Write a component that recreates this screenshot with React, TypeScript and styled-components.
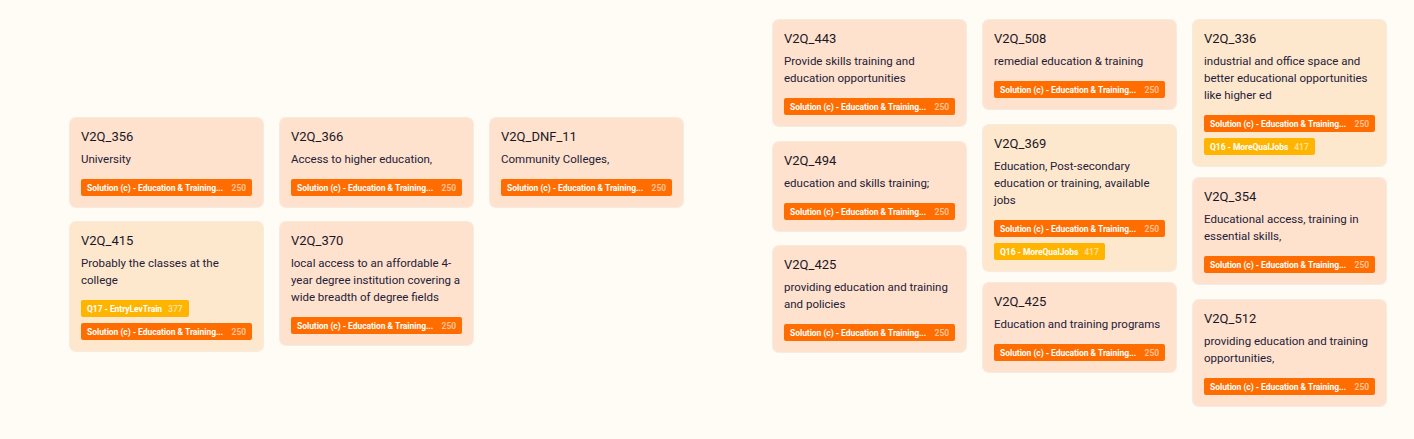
import React from 'react';
import styled, { createGlobalStyle } from 'styled-components';

type TagKind = 'solution' | 'question';

interface TagData {
  kind: TagKind;
  label: string;
  count: number;
}

interface CardData {
  id: string;
  text: string;
  tags: TagData[];
  space?: number;
}

const SOLUTION: TagData = { kind: 'solution', label: 'Solution (c) - Education & Training...', count: 250 };
const JOBS: TagData = { kind: 'question', label: 'Q16 - MoreQualJobs', count: 417 };
const ENTRY: TagData = { kind: 'question', label: 'Q17 - EntryLevTrain', count: 377 };

const leftGroup: CardData[][] = [
  [
    { id: 'V2Q_356', text: 'University', tags: [SOLUTION] },
    { id: 'V2Q_415', text: 'Probably the classes at the college', tags: [ENTRY, SOLUTION], space: 15 },
  ],
  [
    { id: 'V2Q_366', text: 'Access to higher education,', tags: [SOLUTION] },
    { id: 'V2Q_370', text: 'local access to an affordable 4-year degree institution covering a wide breadth of degree fields', tags: [SOLUTION], space: 15 },
  ],
  [{ id: 'V2Q_DNF_11', text: 'Community Colleges,', tags: [SOLUTION] }],
];

const rightGroup: CardData[][] = [
  [
    { id: 'V2Q_443', text: 'Provide skills training and education opportunities', tags: [SOLUTION] },
    { id: 'V2Q_494', text: 'education and skills training;', tags: [SOLUTION], space: 16 },
    { id: 'V2Q_425', text: 'providing education and training and policies', tags: [SOLUTION], space: 15 },
  ],
  [
    { id: 'V2Q_508', text: 'remedial education & training', tags: [SOLUTION] },
    { id: 'V2Q_369', text: 'Education, Post-secondary education or training, available jobs', tags: [SOLUTION, JOBS], space: 16 },
    { id: 'V2Q_425', text: 'Education and training programs', tags: [SOLUTION], space: 12 },
  ],
  [
    { id: 'V2Q_336', text: 'industrial and office space and better educational opportunities like higher ed', tags: [SOLUTION, JOBS] },
    { id: 'V2Q_354', text: 'Educational access, training in essential skills,', tags: [SOLUTION], space: 12 },
    { id: 'V2Q_512', text: 'providing education and training opportunities,', tags: [SOLUTION], space: 16 },
  ],
];

const GlobalStyle = createGlobalStyle`
  html, body {
    margin: 0;
    padding: 0;
    background: #fffbf5;
  }
  body {
    font-family: Roboto, "Noto Sans", "DejaVu Sans", sans-serif;
    color: #1d1a2c;
  }
`;

const Canvas = styled.div`
  display: flex;
  align-items: flex-start;
  gap: 90px;
  padding: 20px 28px 0 70px;
  height: 439px;
  box-sizing: border-box;
`;

const Group = styled.div<{ $top: number }>`
  display: flex;
  gap: 17px;
  margin-top: ${p => p.$top}px;
`;

const Column = styled.div`
  display: flex;
  flex-direction: column;
  width: 193px;
`;

const Card = styled.div<{ $warm: boolean; $space: number }>`
  box-sizing: border-box;
  width: 193px;
  margin-top: ${p => p.$space}px;
  padding: 10px 11px 11px;
  border-radius: 6px;
  background: ${p => (p.$warm ? '#fee8cd' : '#fee2cd')};
  box-shadow: 0 0 0 1px rgba(235, 215, 200, 0.45);
  display: flex;
  flex-direction: column;
`;

const Title = styled.div`
  font-size: 13px;
  line-height: 18px;
  font-weight: 400;
  color: #1a1728;
`;

const Body = styled.div`
  margin-top: 5px;
  font-size: 11.5px;
  line-height: 17px;
  color: #24203a;
`;

const Tags = styled.div`
  margin-top: 11px;
  display: flex;
  flex-direction: column;
  align-items: flex-start;
  gap: 6px;
`;

const Tag = styled.div<{ $kind: TagKind }>`
  box-sizing: border-box;
  display: flex;
  align-items: center;
  width: ${p => (p.$kind === 'solution' ? '100%' : 'auto')};
  height: 17px;
  padding: 0 6px;
  border-radius: 2px;
  background: ${p => (p.$kind === 'solution' ? '#ff6d00' : '#ffb400')};
  color: #ffffff;
  font-size: 8.5px;
  font-weight: 700;
  letter-spacing: -0.05px;
  white-space: nowrap;
`;

const TagLabel = styled.span`
  flex: 1;
`;

const TagCount = styled.span`
  margin-left: 6px;
  flex-shrink: 0;
  opacity: 0.6;
  font-weight: 600;
`;

const NoteCard: React.FC<{ card: CardData }> = ({ card }) => (
  <Card $warm={card.tags.some(t => t.kind === 'question')} $space={card.space ?? 0}>
    <Title>{card.id}</Title>
    <Body>{card.text}</Body>
    <Tags>
      {card.tags.map((t, i) => (
        <Tag key={i} $kind={t.kind}>
          <TagLabel>{t.label}</TagLabel>
          <TagCount>{t.count}</TagCount>
        </Tag>
      ))}
    </Tags>
  </Card>
);

const Cluster: React.FC<{ columns: CardData[][]; top: number }> = ({ columns, top }) => (
  <Group $top={top}>
    {columns.map((col, ci) => (
      <Column key={ci}>
        {col.map((c, i) => (
          <NoteCard key={i} card={c} />
        ))}
      </Column>
    ))}
  </Group>
);

export default function App() {
  return (
    <>
      <GlobalStyle />
      <Canvas>
        <Cluster columns={leftGroup} top={98} />
        <Cluster columns={rightGroup} top={0} />
      </Canvas>
    </>
  );
}
